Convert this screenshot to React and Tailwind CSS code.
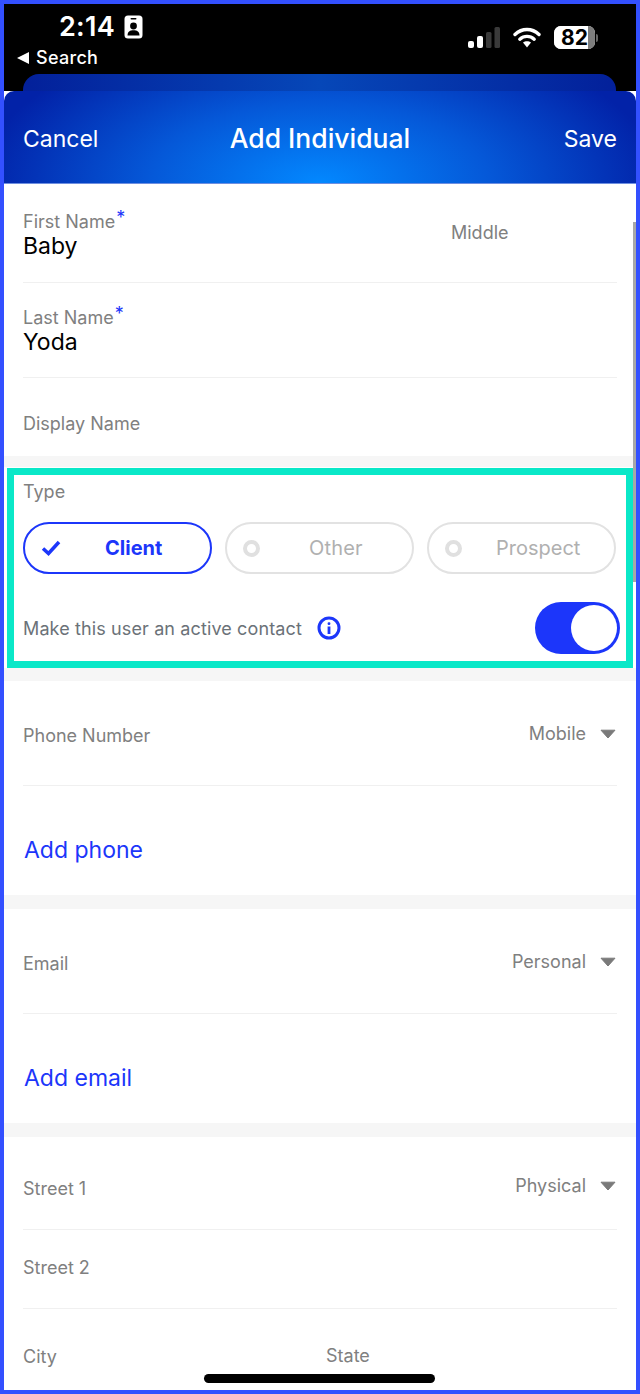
const FONT = "font-['Inter','Liberation_Sans',sans-serif]";

function Caret() {
  return (
    <svg width="16" height="10" viewBox="0 0 16 10" className="shrink-0 -mt-[1px]">
      <path d="M1 1.2 H15 L8 9 Z" fill="#7a7a7a" stroke="#7a7a7a" strokeLinejoin="round" />
    </svg>
  );
}

function Divider() {
  return <div className="h-px bg-[#f0f0f0] mx-[19px]" />;
}

function Gap({ h }) {
  return <div className={`${h} bg-[#f6f6f6]`} />;
}

function Label({ children, star }) {
  return (
    <span className="text-[18px] leading-[22px] text-[#808080] whitespace-nowrap">
      {children}
      {star && <sup className="text-[#1c36fa] text-[18px] leading-none top-[-4px] ml-px">*</sup>}
    </span>
  );
}

function NameRow({ label, value, right, height, pt }) {
  return (
    <div className={`${height} ${pt} px-[19px] flex justify-between`}>
      <div className="flex flex-col">
        <Label star>{label}</Label>
        <span className="text-[23px] leading-[28px] text-black -mt-[1px]">{value}</span>
      </div>
      {right && <div className="w-[166px] pt-[10px]"><Label>{right}</Label></div>}
    </div>
  );
}

function SelectRow({ label, value, height, extra, nudge }) {
  return (
    <div className={`${height} px-[19px] flex items-start justify-between ${extra}`}>
      <Label>{label}</Label>
      <div className={`flex items-center gap-[14px] pr-[1px] ${nudge}`}>
        <span className="text-[18px] leading-[22px] text-[#808080]">{value}</span>
        <Caret />
      </div>
    </div>
  );
}

function OffPill({ label, textClass }) {
  return (
    <div className="relative w-[189px] h-[52px] rounded-full border-2 border-[#e2e2e2] flex items-center pl-[16px]">
      <span className="w-[17px] h-[17px] rounded-full border-[4px] border-[#e0e0e0]" />
      <span className={`text-[20px] text-[#b0b0b0] ${textClass}`}>{label}</span>
    </div>
  );
}

export default function App() {
  return (
    <div className={`${FONT} relative w-[640px] h-[1394px] overflow-hidden border-4 border-[#3350ff] bg-white`}>
      {/* Status bar */}
      <div className="h-[87px] bg-black relative">
        <div className="flex justify-between h-[40px] pl-[55px] pr-[38px] pt-[6px]">
          <div className="flex items-center gap-[9px] h-[34px]">
            <span className="text-[27px] leading-[34px] font-semibold text-white tracking-[0.3px]">2:14</span>
            <svg width="19" height="24" viewBox="0 0 19 24">
              <rect x="0.5" y="0.5" width="18" height="23" rx="3.5" fill="#fff" />
              <rect x="6.5" y="3" width="6" height="1.6" rx="0.8" fill="#000" />
              <circle cx="9.5" cy="11" r="3.4" fill="#000" />
              <path d="M3.5 20.5 C3.5 16.5 6 15.2 9.5 15.2 C13 15.2 15.5 16.5 15.5 20.5 Z" fill="#000" />
            </svg>
          </div>
          <div className="flex items-center gap-[13px] mt-[16px] h-[23px]">
            <svg width="32" height="21" viewBox="0 0 32 21">
              <rect x="0" y="14" width="6" height="7" rx="2" fill="#fff" />
              <rect x="9" y="9" width="6" height="12" rx="2" fill="#fff" />
              <rect x="18" y="5" width="5.5" height="16" rx="1.5" fill="#3a3a3a" />
              <rect x="26.5" y="0" width="5.5" height="21" rx="1.5" fill="#3a3a3a" />
            </svg>
            <svg width="28" height="21" viewBox="0 0 28 21">
              <path d="M2 7.5 C9 0.8 19 0.8 26 7.5" fill="none" stroke="#fff" strokeWidth="3.4" strokeLinecap="round" />
              <path d="M6.8 12.2 C11 8.4 17 8.4 21.2 12.2" fill="none" stroke="#fff" strokeWidth="3.4" strokeLinecap="round" />
              <path d="M10 15.6 L14 20.5 L18 15.6 C15.8 13.8 12.2 13.8 10 15.6 Z" fill="#fff" />
            </svg>
            <div className="flex items-center gap-[1px]">
              <div className="relative w-[41px] h-[23px] rounded-[7px] overflow-hidden bg-white flex">
                <div className="w-[34px] h-full bg-white" />
                <div className="w-[7px] h-full bg-[#7d7d7d]" />
                <span className="absolute left-[7px] top-0 text-[21px] leading-[23px] font-bold text-black">82</span>
              </div>
              <div className="w-[2px] h-[8px] rounded-r bg-[#666]" />
            </div>
          </div>
        </div>
        <div className="flex items-center gap-[7px] pl-[13px] mt-[3px]">
          <svg width="12" height="12" viewBox="0 0 12 12"><path d="M0 6 L12 0 V12 Z" fill="#fff" /></svg>
          <span className="text-[18px] leading-[22px] text-white font-medium tracking-[0.3px]">Search</span>
        </div>
        <div className="absolute left-[19px] right-[20px] bottom-0 h-[17px] rounded-t-[16px] bg-[linear-gradient(90deg,#03209a_0%,#0647b8_50%,#03209a_100%)]" />
      </div>

      {/* Header */}
      <div className="h-[93px] rounded-t-[10px] bg-[radial-gradient(ellipse_340px_160px_at_50%_100%,#0388ff_0%,#0558d8_50%,#0222a8_100%)] border-b border-[#6f8fe0] flex items-center justify-between px-[19px] relative">
        <span className="text-[23px] leading-[30px] text-white pt-[4px]">Cancel</span>
        <span className="absolute left-0 right-0 text-center text-[26.5px] leading-[34px] pt-[2px] text-white font-medium">Add Individual</span>
        <span className="text-[23px] leading-[30px] text-white pt-[4px]">Save</span>
      </div>

      {/* Name section */}
      <NameRow label="First Name" value="Baby" right="Middle" height="h-[98px]" pt="pt-[27px]" />
      <Divider />
      <NameRow label="Last Name" value="Yoda" height="h-[94px]" pt="pt-[24px]" />
      <Divider />
      <div className="h-[78px] px-[19px] pt-[34px]"><Label>Display Name</Label></div>
      <Gap h="h-[11px]" />

      {/* Type section */}
      <div className="h-[201px] px-[19px] pt-[13px]">
        <div className="h-[22px]"><Label>Type</Label></div>
        <div className="flex gap-[13px] mt-[20px]">
          <div className="relative w-[189px] h-[52px] rounded-full border-2 border-[#1c36fa] flex items-center pl-[16px]">
            <svg width="20" height="16" viewBox="0 0 20 16">
              <path d="M2 8.5 L7.5 13.5 L18 2" fill="none" stroke="#1c36fa" strokeWidth="3.5" />
            </svg>
            <span className="text-[20px] font-bold text-[#1c36fa] ml-[44px]">Client</span>
          </div>
          <OffPill label="Other" textClass="ml-[49px] tracking-[0.2px]" />
          <OffPill label="Prospect" textClass="ml-[34px]" />
        </div>
        <div className="flex items-center justify-between mt-[28px]">
          <div className="flex items-center gap-[15px]">
            <span className="text-[18px] leading-[22px] pt-[2px] text-[#6b7278] tracking-[0.12px]">Make this user an active contact</span>
            <svg width="24" height="24" viewBox="0 0 24 24">
              <circle cx="12" cy="12" r="10" fill="none" stroke="#1c36fa" strokeWidth="3" />
              <rect x="10.6" y="10.5" width="2.8" height="7.5" fill="#1c36fa" />
              <rect x="10.6" y="6.2" width="2.8" height="2.8" rx="1.2" fill="#1c36fa" />
            </svg>
          </div>
          <div className="w-[85px] h-[52px] rounded-full bg-[#1c36fa] flex items-center justify-end pr-[3px] -mr-[3px]">
            <div className="w-[46px] h-[46px] rounded-full bg-white" />
          </div>
        </div>
      </div>
      <Gap h="h-[13px]" />

      {/* Phone */}
      <SelectRow label="Phone Number" value="Mobile" height="h-[104px]" extra="pt-[44px]" nudge="-mt-[2px]" />
      <Divider />
      <div className="h-[109px] px-[20px] pt-[49px]"><span className="text-[23px] leading-[30px] text-[#1c36fa]">Add phone</span></div>
      <Gap h="h-[14px]" />

      {/* Email */}
      <SelectRow label="Email" value="Personal" height="h-[104px]" extra="pt-[44px]" nudge="-mt-[2px]" />
      <Divider />
      <div className="h-[109px] px-[20px] pt-[49px]"><span className="text-[23px] leading-[30px] text-[#1c36fa]">Add email</span></div>
      <Gap h="h-[14px]" />

      {/* Address */}
      <SelectRow label="Street 1" value="Physical" height="h-[92px]" extra="pt-[41px]" nudge="-mt-[3px]" />
      <Divider />
      <div className="h-[78px] px-[19px] pt-[26px]"><Label>Street 2</Label></div>
      <Divider />
      <div className="px-[19px] pt-[36px] flex">
        <div className="w-[303px]"><Label>City</Label></div>
        <Label>State</Label>
      </div>

      {/* Overlays */}
      <div className="absolute left-[3px] top-[464px] w-[626px] h-[200px] border-[7px] border-[#0ae8c8]" />
      <div className="absolute right-0 top-[218px] w-[3px] h-[360px] bg-[#a8a8a8]" />
      <div className="absolute left-[200px] top-[1370px] w-[231px] h-[9px] rounded-full bg-black" />
    </div>
  );
}
